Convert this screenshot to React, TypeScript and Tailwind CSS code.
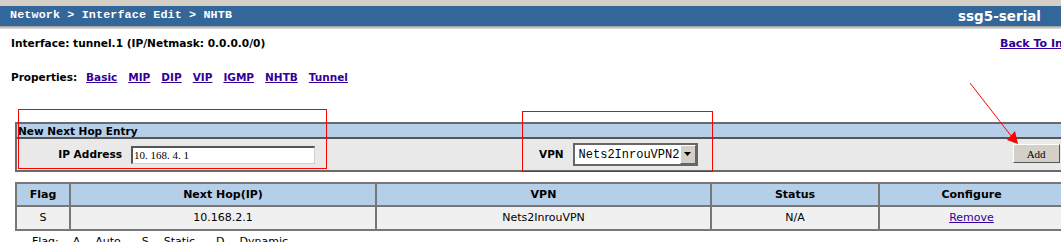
import React from "react";

const verdana = { fontFamily: '"DejaVu Sans", Verdana, sans-serif' };

function PropLink({ children }: { children: React.ReactNode }) {
  return <a className="text-[#330099] underline font-bold">{children}</a>;
}

export default function App() {
  return (
    <div className="relative w-[1061px] h-[242px] overflow-hidden bg-white text-[11px] text-black" style={verdana}>
      {/* top bar */}
      <div className="h-[6px] bg-[#d4d0c8]" />
      <div className="h-[20px] bg-[#336699] flex items-center justify-between pl-[10px] pr-[20px] text-white">
        <span className="font-bold text-[11.7px] tracking-[0.15px]" style={{ fontFamily: '"Liberation Mono", "Courier New", monospace' }}>
          Network &gt; Interface Edit &gt; NHTB
        </span>
        <span className="font-bold text-[13.5px]">ssg5-serial</span>
      </div>
      <div className="h-[3px] bg-gradient-to-b from-[#9a9a9a] to-[#e8e8e8]" />

      <div className="flex justify-between items-start pt-[7px] pl-[11px]">
        <span className="font-bold text-[10.6px]">Interface: tunnel.1 (IP/Netmask: 0.0.0.0/0)</span>
        <a className="font-bold text-[#330099] underline whitespace-nowrap w-[61px] overflow-hidden">Back To Interfaces</a>
      </div>

      <div className="flex gap-[9px] pl-[11px] pt-[17px] text-[10.5px]">
        <span className="font-bold">Properties:</span>
        <div className="flex gap-[11px]">
          <PropLink>Basic</PropLink>
          <PropLink>MIP</PropLink>
          <PropLink>DIP</PropLink>
          <PropLink>VIP</PropLink>
          <PropLink>IGMP</PropLink>
          <PropLink>NHTB</PropLink>
          <PropLink>Tunnel</PropLink>
        </div>
      </div>

      {/* new next hop entry */}
      <div className="ml-[15px] mt-[37px] w-[1060px] border-t-2 border-l-2 border-b-2 border-[#6a6a6a]">
        <div className="h-[15px] bg-[#b5cfe9] border-b-2 border-[#555] flex items-center pl-[1px] font-bold text-[10.5px] leading-none">
          New Next Hop Entry
        </div>
        <div className="h-[31px] bg-[#e9e9e9] flex items-center">
          <div className="w-[106px] text-right font-bold text-[10.6px] pr-[1px]">IP Address</div>
          <div className="ml-[8px] w-[184px] h-[18px] bg-white border-t-2 border-l-2 border-[#555] border-b border-r border-b-[#d4d0c8] border-r-[#d4d0c8] flex items-center pl-[1px] text-[11px]" style={{ fontFamily: '"Liberation Serif", serif' }}>
            10. 168. 4. 1
          </div>
          <div className="ml-[224px] font-bold text-[10.5px]">VPN</div>
          <div className="ml-[9px] w-[125px] h-[23px] bg-white border-2 border-[#666] flex items-center justify-between">
            <span className="pl-[4px] text-[12px]" style={{ fontFamily: '"Liberation Mono", monospace' }}>Nets2InrouVPN2</span>
            <span className="w-[16px] h-[19px] bg-[#d4d0c8] border border-[#fff] border-r-[#666] border-b-[#666] flex items-center justify-center">
              <svg width="8" height="5" viewBox="0 0 8 5"><path d="M0 0h7L3.5 4z" fill="#000" /></svg>
            </span>
          </div>
          <div className="ml-[315px] -mt-[2px] w-[47px] h-[19px] bg-[#d4d0c8] border border-[#fff] border-r-[#555] border-b-[#555] flex items-center justify-center text-[11px]" style={{ fontFamily: '"Liberation Serif", serif' }}>
            Add
          </div>
        </div>
      </div>

      {/* table */}
      <div className="ml-[15px] mt-[10px] w-[1060px] border-t-2 border-l-2 border-b-2 border-[#777]">
        <div className="grid grid-cols-[54px_306px_335px_168px_197px] h-[23px] bg-[#b5cfe9] font-bold text-[11px] border-b-2 border-[#777]">
          <div className="flex items-center justify-center border-r-2 border-[#777]">Flag</div>
          <div className="flex items-center justify-center border-r-2 border-[#777]">Next Hop(IP)</div>
          <div className="flex items-center justify-center border-r-2 border-[#777]">VPN</div>
          <div className="flex items-center justify-center border-r-2 border-[#777]">Status</div>
          <div className="flex items-center justify-center pr-[14px]">Configure</div>
        </div>
        <div className="grid grid-cols-[54px_306px_335px_168px_197px] h-[22px] bg-[#f0f0f0] text-[11px]">
          <div className="flex items-center justify-center border-r-2 border-[#777]">S</div>
          <div className="flex items-center justify-center border-r-2 border-[#777]">10.168.2.1</div>
          <div className="flex items-center justify-center border-r-2 border-[#777]">Nets2InrouVPN</div>
          <div className="flex items-center justify-center border-r-2 border-[#777]">N/A</div>
          <div className="flex items-center justify-center pr-[14px]"><a className="text-[#330099] underline">Remove</a></div>
        </div>
      </div>
      <div className="pl-[32px] pt-[3px] text-[11px] whitespace-pre">Flag:    A -- Auto      S -- Static      D -- Dynamic</div>

      {/* annotations */}
      <div className="absolute left-[18px] top-[109px] w-[309px] h-[60px] border border-[#ff0000]" />
      <div className="absolute left-[522px] top-[111px] w-[191px] h-[61px] border border-[#ff0000]" />
      <svg className="absolute left-0 top-0" width="1061" height="242">
        <line x1="970" y1="83" x2="1012" y2="137" stroke="#ff0000" strokeWidth="1" />
        <polygon points="1018,144 1007,140 1015,131" fill="#ff0000" />
      </svg>
    </div>
  );
}
